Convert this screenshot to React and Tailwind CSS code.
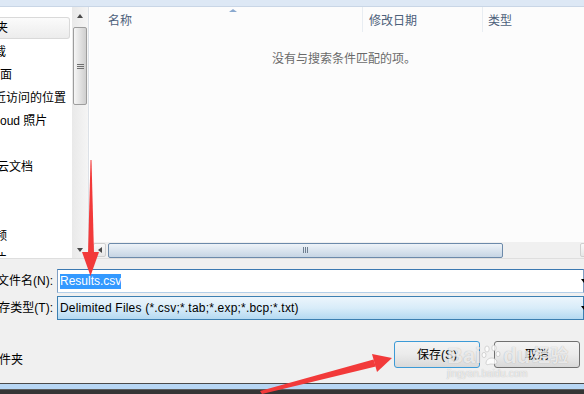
import React from 'react'

// 左侧导航（横向滚动过，只露出右半截文字）
const navItems = [
  { text: '收藏夹', ml: '-ml-[28px]', selected: true },
  { text: '下载', ml: '-ml-[18px]' },
  { text: '桌面', ml: '-ml-[12px]' },
  { text: '最近访问的位置', ml: '-ml-[18px]' },
  { text: 'iCloud 照片', ml: '-ml-[14px]' },
  { text: '', ml: '' },
  { text: '云文档', ml: '-ml-[3px]' },
  { text: '', ml: '' },
  { text: '', ml: '' },
  { text: '视频', ml: '-ml-[17px]' },
  { text: '图片', ml: '-ml-[17px]' },
]

function NavPane() {
  return (
    <div className="w-[72px] shrink-0 overflow-hidden bg-white pt-[10px] text-[12px] text-black">
      {navItems.map((item, i) =>
        item.selected ? (
          <div
            key={i}
            className="mb-px flex h-[22px] w-[70px] items-center whitespace-nowrap rounded-r-[3px] border border-l-0 border-[#d9d9d9] bg-linear-to-b from-[#fbfbfb] to-[#ececec]"
          >
            <span className={item.ml}>{item.text}</span>
          </div>
        ) : (
          <div key={i} className="flex h-[23px] items-center whitespace-nowrap">
            <span className={item.ml}>{item.text}</span>
          </div>
        )
      )}
    </div>
  )
}

function VScroll() {
  return (
    <div className="flex w-[16px] shrink-0 flex-col bg-linear-to-r from-[#e9e9e9] to-[#f5f5f5]">
      <div className="flex h-[18px] items-center justify-center">
        <div className="h-0 w-0 border-x-[3.5px] border-b-[4px] border-x-transparent border-b-[#4a4a4a]" />
      </div>
      <div className="mx-px mt-[2px] flex h-[78px] flex-col items-center justify-center gap-[1px] rounded-[2px] border border-[#9d9d9d] bg-linear-to-r from-[#f6f6f6] to-[#cfcfcf]">
        <div className="h-px w-[7px] bg-[#6f6f6f]" />
        <div className="h-px w-[7px] bg-[#6f6f6f]" />
        <div className="h-px w-[7px] bg-[#6f6f6f]" />
      </div>
      <div className="flex-1" />
      <div className="flex h-[17px] items-center justify-center">
        <div className="h-0 w-0 border-x-[3.5px] border-t-[4px] border-x-transparent border-t-[#4a4a4a]" />
      </div>
    </div>
  )
}

function ListPane() {
  return (
    <div className="flex min-w-0 flex-1 flex-col bg-[#fcfcfc] text-[12px]">
      <div className="flex h-[25px] shrink-0 text-[#4c607a]">
        <div className="relative flex w-[273px] items-center border-r border-[#e8edf2] pl-[18px] pt-[3px]">
          名称
          <div className="absolute left-[139px] top-[2px] h-0 w-0 border-x-[4px] border-b-[3px] border-x-transparent border-b-[#8aa9cf]" />
        </div>
        <div className="flex w-[120px] items-center border-r border-[#e8edf2] pl-[6px] pt-[3px]">修改日期</div>
        <div className="flex items-center pl-[5px] pt-[3px]">类型</div>
      </div>
      <div className="flex-1 pl-[182px] pt-[18px] text-[#6a6a6a]">没有与搜索条件匹配的项。</div>
      <div className="flex h-[16px] shrink-0 items-center overflow-hidden bg-[#f0f0f0]">
        <div className="ml-[3px] flex h-[14px] w-[13px] shrink-0 items-center justify-center rounded-[2px] border border-[#cfcfcf] bg-linear-to-b from-[#fafafa] to-[#e6e6e6]">
          <div className="h-0 w-0 border-y-[3.5px] border-r-[4px] border-y-transparent border-r-[#4a4a4a]" />
        </div>
        <div className="ml-[2px] flex h-[15px] w-[395px] shrink-0 items-center justify-center gap-[1px] rounded-[2px] border border-[#6c8aaa] bg-linear-to-b from-[#eef3f8] to-[#c6d5e4]">
          <div className="h-[6px] w-px bg-[#6f7f90]" />
          <div className="h-[6px] w-px bg-[#6f7f90]" />
          <div className="h-[6px] w-px bg-[#6f7f90]" />
        </div>
        <div className="w-[77px] shrink-0" />
        <div className="h-[14px] w-[16px] shrink-0 rounded-[2px] border border-[#cfcfcf] bg-linear-to-b from-[#fafafa] to-[#e6e6e6]" />
      </div>
    </div>
  )
}

function Triangle() {
  return <div className="-mr-[4px] ml-auto h-0 w-0 shrink-0 border-x-[3px] border-t-[4px] border-x-transparent border-t-black" />
}

export default function App() {
  return (
    <div className="relative flex h-[394px] w-[584px] flex-col overflow-hidden bg-[#f0f0f0] font-['Liberation_Sans','Noto_Sans_CJK_SC',sans-serif] text-[12px] text-black">
      <div className="h-[7px] shrink-0 border-b border-[#c9d6e6] bg-[#dde8f5]" />

      <div className="flex h-[252px] shrink-0 border-b border-[#dedede]">
        <NavPane />
        <VScroll />
        <div className="w-[2px] shrink-0 border-l border-[#dce1e7] bg-white" />
        <ListPane />
      </div>

      <div className="flex flex-1 flex-col pt-[10px]">
        <div className="flex h-[24px] items-center">
          <div className="flex w-[53px] shrink-0 justify-end overflow-hidden whitespace-nowrap">文件名(N):</div>
          <div className="ml-[4px] flex h-[24px] flex-1 items-center border border-[#7f9fc4] border-b-[#b3cfe9] border-t-[#3c79b1] bg-white pl-[2px]">
            <span className="inline-block bg-[#3399ff] leading-[15px] text-white">Results.csv</span>
            <Triangle />
          </div>
        </div>
        <div className="mt-[3px] flex h-[24px] items-center">
          <div className="flex w-[53px] shrink-0 justify-end overflow-hidden whitespace-nowrap">保存类型(T):</div>
          <div className="ml-[4px] flex h-[24px] flex-1 items-center whitespace-nowrap border border-[#3c7fb1] bg-linear-to-b from-[#ecf5fc] via-[#d8ecf9] to-[#b4d9f1] pl-[2px] tracking-[0.2px]">
            Delimited Files (*.csv;*.tab;*.exp;*.bcp;*.txt)
            <Triangle />
          </div>
        </div>

        <div className="mt-[21px] flex items-start">
          <div className="mt-[10px] whitespace-nowrap">
            <span className="-ml-[37px]">隐藏文件夹</span>
          </div>
          <div className="ml-auto mr-[4px] flex gap-[14px]">
            <button className="flex h-[27px] w-[86px] items-center justify-center rounded-[3px] border border-[#3c9ad6] bg-linear-to-b from-[#f4f4f4] via-[#ebebeb] to-[#d9d9d9]">
              保存(S)
            </button>
            <button className="flex h-[27px] w-[86px] items-center justify-center rounded-[3px] border border-[#707070] bg-linear-to-b from-[#f4f4f4] via-[#ebebeb] to-[#d9d9d9]">
              取消
            </button>
          </div>
        </div>
      </div>

      <div className="flex h-[11px] shrink-0 flex-col">
        <div className="h-px bg-[#4a4a4a]" />
        <div className="h-[5px] bg-[#b7d6f4]" />
        <div className="flex-1 border-t border-[#5c5c5c] bg-[#353535]" />
      </div>

      {/* 百度经验水印 */}
      <div className="pointer-events-none absolute left-[447px] top-[344px] flex flex-col text-white/75 [text-shadow:0_0_1px_rgba(0,0,0,0.3)]">
        <div className="flex items-end text-[22px] font-bold leading-[24px]">
          <span>Bai</span>
          <svg width="22" height="24" viewBox="0 0 22 24" className="-mt-[10px] opacity-80">
            <g fill="white" stroke="#b0b0b0" strokeWidth="0.6">
              <ellipse cx="6" cy="5" rx="2.2" ry="3" />
              <ellipse cx="13" cy="4" rx="2.2" ry="3" />
              <ellipse cx="3" cy="11" rx="2" ry="2.6" />
              <ellipse cx="17" cy="10" rx="2" ry="2.6" />
              <path d="M5 19 C5 13 15 12 16 18 C16 21 12 20 10 20 C8 20 5 22 5 19 Z" />
            </g>
          </svg>
          <span>du</span>
          <span className="ml-[2px] text-[18px]">经验</span>
        </div>
        <div className="mt-[1px] text-[10px] leading-[10px]">jingyan.baidu.com</div>
      </div>

      {/* 红色箭头 */}
      <svg className="pointer-events-none absolute inset-0" width="584" height="394" viewBox="0 0 584 394">
        <g fill="#f23a3a">
          <polygon points="90.5,160 91.5,160 94,254 88,254" />
          <polygon points="82,252 99,252 90.5,276" />
          <polygon points="392,358 372,354 377,372" />
          <polygon points="373.5,359.5 375.8,366.5 262,394 260,391" />
        </g>
      </svg>
    </div>
  )
}
